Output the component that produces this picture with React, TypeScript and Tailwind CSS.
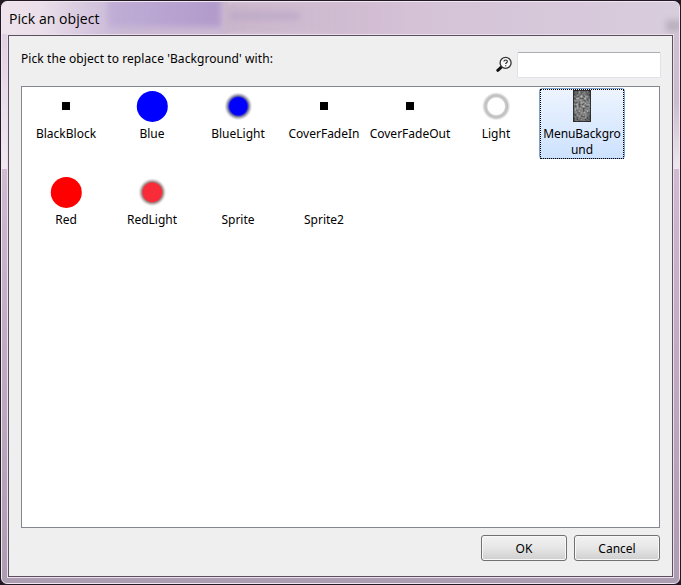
import React from 'react';

type Item = { name: string; icon?: React.ReactNode; selected?: boolean };

const Block = () => <div className="w-2 h-2 bg-black" />;

const Disc = ({ color }: { color: string }) => (
   <svg width="32" height="32" viewBox="0 0 32 32">
      <circle cx="16.3" cy="16.4" r="15.5" fill={color} />
   </svg>
);

const Glow = ({ id, color, shade, core }: { id: string; color: string; shade: string; core: string }) => (
   <svg width="32" height="32" viewBox="0 0 32 32">
      <defs>
         <radialGradient id={id}>
            <stop offset="0" stopColor={color} />
            <stop offset={core} stopColor={color} />
            <stop offset="0.76" stopColor={shade} stopOpacity="0.6" />
            <stop offset="0.88" stopColor={shade} stopOpacity="0.22" />
            <stop offset="1" stopColor={shade} stopOpacity="0" />
         </radialGradient>
      </defs>
      <circle cx="16.3" cy="16.3" r="14" fill={`url(#${id})`} />
   </svg>
);

const Ring = () => (
   <svg width="32" height="32" viewBox="0 0 32 32">
      <defs>
         <radialGradient id="ring">
            <stop offset="0.58" stopColor="#fff" />
            <stop offset="0.67" stopColor="#c8c8c8" />
            <stop offset="0.8" stopColor="#c0c0c0" />
            <stop offset="0.9" stopColor="#c0c0c0" stopOpacity="0.45" />
            <stop offset="1" stopColor="#c0c0c0" stopOpacity="0" />
         </radialGradient>
      </defs>
      <circle cx="16.2" cy="16.3" r="14.2" fill="url(#ring)" />
   </svg>
);

const Texture = () => (
   <svg width="18" height="32" viewBox="0 0 18 32">
      <defs>
         <filter id="grain" x="0" y="0" width="100%" height="100%" colorInterpolationFilters="sRGB">
            <feTurbulence type="fractalNoise" baseFrequency="0.5" numOctaves="2" seed="4" />
            <feColorMatrix values="0.75 0 0 0 0.13  0.75 0 0 0 0.13  0.75 0 0 0 0.13  0 0 0 0 1" />
         </filter>
         <radialGradient id="vignette" r="0.72">
            <stop offset="0.5" stopColor="#000" stopOpacity="0" />
            <stop offset="1" stopColor="#000" stopOpacity="0.55" />
         </radialGradient>
      </defs>
      <rect width="18" height="32" filter="url(#grain)" />
      <rect width="18" height="32" fill="url(#vignette)" />
      <rect x="0.5" y="0.5" width="17" height="31" fill="none" stroke="#222" strokeOpacity="0.75" />
   </svg>
);

const SearchIcon = () => (
   <svg width="17" height="17" viewBox="0 0 17 17" fill="none">
      <path d="M5.3 11.2 1.8 14.3" stroke="#111" strokeWidth="3" strokeLinecap="round" />
      <circle cx="9.6" cy="6.9" r="5.5" fill="#f8f8f8" stroke="#333" strokeWidth="1.3" />
      <path d="M7.9 5.6c.1-2.2 3.5-2.1 3.5 0 0 1.2-1.7 1.2-1.7 2.5M9.7 9.3v1" stroke="#222" strokeWidth="1.1" />
   </svg>
);

const items: Item[] = [
   { name: 'BlackBlock', icon: <Block /> },
   { name: 'Blue', icon: <Disc color="#0000ff" /> },
   { name: 'BlueLight', icon: <Glow id="blueLight" color="#0000ff" shade="#303060" core="0.62" /> },
   { name: 'CoverFadeIn', icon: <Block /> },
   { name: 'CoverFadeOut', icon: <Block /> },
   { name: 'Light', icon: <Ring /> },
   { name: 'MenuBackground', icon: <Texture />, selected: true },
   { name: 'Red', icon: <Disc color="#ff0000" /> },
   { name: 'RedLight', icon: <Glow id="redLight" color="#f82c38" shade="#663b3b" core="0.66" /> },
   { name: 'Sprite' },
   { name: 'Sprite2' },
];

const ObjectCell = ({ item }: { item: Item }) => (
   <div
      className={`w-[86px] h-[71px] flex flex-col items-center border ${
         item.selected ? 'rounded-[3px] border-[#7da2ce] bg-linear-to-b from-[#edf4fe] to-[#cde2fe]' : 'border-transparent'
      }`}
   >
      <div className={`w-full flex-1 flex flex-col items-center border border-dotted ${item.selected ? 'border-black' : 'border-transparent'}`}>
         <div className="w-8 h-8 flex items-center justify-center shrink-0">{item.icon}</div>
         <div className="w-[80px] mt-1 flex justify-center leading-4 text-center">
            {item.selected ? <span className="w-[80px] break-all tracking-[-0.1px]">{item.name}</span> : <span className="whitespace-nowrap">{item.name}</span>}
         </div>
      </div>
   </div>
);

const DialogButton = ({ label }: { label: string }) => (
   <button className="w-[86px] h-[26px] pt-0.5 rounded-[3px] border border-[#707070] bg-linear-to-b from-[#f2f2f2] from-0% via-[#e6e6e6] via-50% to-[#cfcfcf] shadow-[inset_0_0_0_1px_#f8f8f8]">
      {label}
   </button>
);

export default function App() {
   return (
      <div className="w-[681px] h-[585px] overflow-hidden bg-[#211923] p-px font-['Noto_Sans',sans-serif] text-[12px] text-black">
         <div className="w-[679px] h-[583px] rounded-[6px] border border-[#f1e6f1] relative flex flex-col overflow-hidden bg-linear-to-b from-[#ded1df] from-0% via-[#c9b4cb] via-40% to-[#ad9db1]">
            {/* Glass tints behind the frame */}
            <div className="absolute inset-x-0 top-0 h-8 bg-linear-to-r from-[#eee3ed] from-0% via-[#d4bfd5] via-50% to-[#d8cddd]" />
            <div className="absolute left-[40px] top-0 w-[80px] h-8 bg-linear-to-r from-transparent to-[#c9b9d8]" />
            <div className="absolute left-[116px] top-0 w-[110px] h-8 bg-[#ccbad4]" />
            <div className="absolute left-[106px] -top-1 w-[113px] h-[29px] bg-linear-to-r from-[#c0aed6] to-[#b19acb] blur-[3px]" />
            <div className="absolute left-[222px] top-0 w-[180px] h-8 bg-linear-to-r from-[#c9b5ca] to-transparent blur-[2px]" />
            <div className="absolute left-[228px] top-[10px] w-[70px] h-2 bg-[#b6a2c5]/60 blur-[3px]" />
            <div className="absolute left-[664px] top-[18px] w-4 h-3 bg-[#a79cab]/60 blur-[3px]" />
            <div className="absolute left-0 top-8 w-[6px] h-[135px] bg-linear-to-b from-[#e1d0e3] to-[#f1e8f1]" />
            <div className="absolute right-0 top-8 w-[6px] h-[135px] bg-linear-to-b from-[#cec2d1] via-[#c9bdcc] to-[#eee9ef]" />

            <div className="relative h-8 shrink-0 pl-[7px] pt-[7px] font-['Open_Sans',sans-serif] text-[14px] leading-5 tracking-[0.05px]">
               Pick an object
            </div>

            <div className="relative mx-[5px] w-[667px] h-[544px] border border-[#eadfea]">
               <div className="w-full h-full border border-[#5c5060] bg-[#efefef] px-3 flex flex-col">
                  <div className="h-[50px] flex justify-between shrink-0">
                     <div className="pt-[15px] leading-4 tracking-[0.08px]">Pick the object to replace 'Background' with:</div>
                     <div className="flex items-start pt-[16px] -mr-px">
                        <div className="mt-[4px] mr-[4px]"><SearchIcon /></div>
                        <input className="w-[144px] h-[26px] bg-white border border-[#dfe2ea] border-t-[#abadb3] rounded-[2px] px-1 outline-none" />
                     </div>
                  </div>

                  <div className="w-[639px] h-[442px] shrink-0 bg-white border border-[#828790] pl-px pt-px">
                     <div className="grid grid-cols-[repeat(7,86px)] auto-rows-[86px]">
                        {items.map((item) => <ObjectCell key={item.name} item={item} />)}
                     </div>
                  </div>

                  <div className="flex justify-end gap-[7px] pt-[7px]">
                     <DialogButton label="OK" />
                     <DialogButton label="Cancel" />
                  </div>
               </div>
            </div>
         </div>
      </div>
   );
}
